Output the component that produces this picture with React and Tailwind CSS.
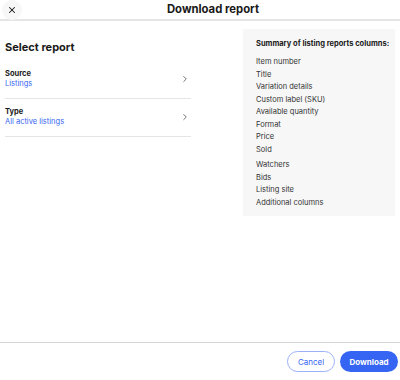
import { ChevronRight, X } from "lucide-react";

const columns = [
  "Item number",
  "Title",
  "Variation details",
  "Custom label (SKU)",
  "Available quantity",
  "Format",
  "Price",
  "Sold",
];

const moreColumns = ["Watchers", "Bids", "Listing site", "Additional columns"];

function PickRow({ label, value }) {
  return (
    <div className="flex items-center justify-between">
      <div>
        <div className="text-[7.5px] leading-[10px] font-bold text-[#191919]">{label}</div>
        <div className="text-[7.5px] leading-[10px] text-[#3665f3]">{value}</div>
      </div>
      <ChevronRight size={10} strokeWidth={2} className="mr-[1px] text-[#555]" />
    </div>
  );
}

export default function App() {
  return (
    <div
      className="w-[400px] h-[380px] flex flex-col bg-white text-[#191919]"
      style={{ fontFamily: "Inter, 'Noto Sans', sans-serif" }}
    >
      <div className="relative h-[21px] flex items-center justify-center pl-[26px] border-b-2 border-[#e5e5e5] shrink-0">
        <button className="absolute left-[2px] top-[0px] w-[20px] h-[20px] rounded-full bg-[#f7f7f7] flex items-center justify-center">
          <X size={10} strokeWidth={2.5} className="text-[#191919]" />
        </button>
        <h1 className="text-[11.3px] font-bold leading-[18px] -mt-[2px]">Download report</h1>
      </div>

      <div className="flex flex-1">
        <div className="w-[186px] ml-[5px]">
          <h2 className="mt-[19px] text-[11px] leading-[14px] font-bold">Select report</h2>
          <div className="pt-[15px] pb-[9px] border-b border-[#e5e5e5]">
            <PickRow label="Source" value="Listings" />
          </div>
          <div className="pt-[8px] pb-[9px] border-b border-[#e5e5e5]">
            <PickRow label="Type" value="All active listings" />
          </div>
        </div>

        <div className="ml-auto mr-[5px] mt-[8px] w-[152px] h-[187px] bg-[#f7f7f7] pl-[13px] pt-[9px]">
          <div className="text-[7.5px] leading-[12px] font-bold">Summary of listing reports columns:</div>
          <div className="mt-[6px] text-[7.5px] leading-[12.5px] text-[#333]">
            {columns.map((c) => (
              <div key={c}>{c}</div>
            ))}
            <div className="mt-[3px]">
              {moreColumns.map((c) => (
                <div key={c}>{c}</div>
              ))}
            </div>
          </div>
        </div>
      </div>

      <div className="h-[38px] border-t border-[#d5d5d5] flex items-start justify-end gap-[5px] pt-[8px] pr-[2px] shrink-0">
        <button className="w-[48px] h-[21px] rounded-full border border-[#9ab0f8] text-[#3665f3] text-[8px]">
          Cancel
        </button>
        <button className="w-[58px] h-[21px] rounded-full bg-[#3665f3] text-white font-bold text-[8px]">
          Download
        </button>
      </div>
    </div>
  );
}
